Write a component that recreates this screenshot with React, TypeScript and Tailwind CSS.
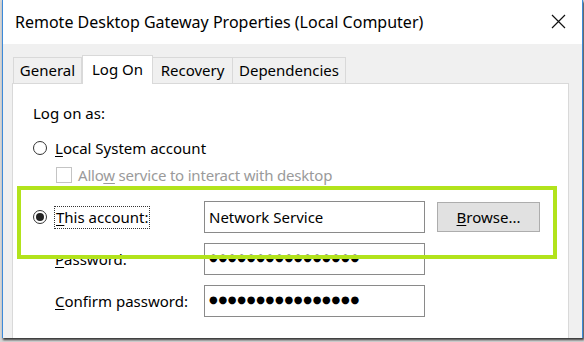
import React from "react";

const Radio = ({ checked }: { checked?: boolean }) => (
  <span className="w-[14px] h-[14px] rounded-full border border-[#333] bg-white flex items-center justify-center shrink-0">
    {checked && <span className="w-[8px] h-[8px] rounded-full bg-[#222]" />}
  </span>
);

const Field = ({ children }: { children?: React.ReactNode }) => (
  <div className="w-[221px] h-[32px] border border-[#8a8a8a] bg-white flex items-center px-[4px]">
    {children}
  </div>
);

const Dots = () => (
  <span className="font-['DejaVu_Sans',sans-serif] text-[10px] tracking-[0.7px] leading-none text-black mt-[-3px]">
    ●●●●●●●●●●●●●●●●
  </span>
);

export default function App() {
  return (
    <div className="w-[584px] h-[342px] bg-[#d6d6d6] overflow-hidden font-['Noto_Sans',sans-serif] text-[15px] text-black">
      <div className="ml-[2px] w-[581px] h-[338px] border-x border-[#3d8ad9] bg-[#f0f0f0] flex flex-col shadow-[1px_2px_2px_rgba(0,0,0,0.75)]">
        {/* title bar */}
        <div className="h-[44px] bg-white flex items-center justify-between pl-[12px] pr-[16px] shrink-0">
          <span className="text-[16px] leading-none">Remote Desktop Gateway Properties (Local Computer)</span>
          <svg width="15" height="15" viewBox="0 0 15 15" className="mt-[-1px]">
            <path d="M1 1 L14 14 M14 1 L1 14" stroke="#111" strokeWidth="1.2" />
          </svg>
        </div>

        {/* body */}
        <div className="flex-1 flex flex-col pl-[9px] pr-[13px] pt-[11px]">
          {/* tabs */}
          <div className="flex items-end h-[28px] relative z-10">
            <div className="w-[69px] h-[26px] border border-b-0 border-[#d9d9d9] bg-[#f0f0f0] flex items-center justify-center ml-[1px]">
              General
            </div>
            <div className="w-[71px] h-[29px] mb-[-1px] border border-b-0 border-[#d9d9d9] bg-white flex items-center justify-center pb-[2px]">
              Log On
            </div>
            <div className="w-[80px] h-[26px] border border-b-0 border-l-0 border-[#d9d9d9] bg-[#f0f0f0] flex items-center justify-center">
              Recovery
            </div>
            <div className="w-[113px] h-[26px] border border-b-0 border-l-0 border-[#d9d9d9] bg-[#f0f0f0] flex items-center justify-center">
              Dependencies
            </div>
          </div>

          {/* panel */}
          <div className="flex-1 bg-white border border-[#d9d9d9] border-b-0 pl-[20px] pt-[18px] relative">
            <div className="h-[22px] flex items-center">Log on as:</div>

            <div className="h-[22px] mt-[13px] flex items-center gap-[8px]">
              <Radio />
              <span>
                <span className="underline underline-offset-2">L</span>ocal System account
              </span>
            </div>

            <div className="h-[22px] mt-[5px] flex items-center gap-[6px] pl-[23px] text-[#9a9a9a] tracking-[-0.2px]">
              <span className="w-[16px] h-[16px] border border-[#c4c4c4] bg-white shrink-0" />
              <span>
                Allo<span className="underline underline-offset-2">w</span> service to interact with desktop
              </span>
            </div>

            <div className="h-[32px] mt-[15px] flex items-center">
              <div className="w-[171px] flex items-center gap-[7px]">
                <Radio checked />
                <span className="border border-dotted border-[#333] px-[1px] h-[23px] flex items-center">
                  <span className="underline underline-offset-2">T</span>his account:
                </span>
              </div>
              <Field>Network Service</Field>
              <button className="ml-[12px] w-[103px] h-[30px] bg-[#e1e1e1] border border-[#adadad] flex items-center justify-center">
                <span>
                  <span className="underline underline-offset-2">B</span>rowse...
                </span>
              </button>
            </div>

            <div className="h-[32px] mt-[10px] flex items-center">
              <div className="w-[171px] pl-[22px]">
                <span className="underline underline-offset-2">P</span>assword:
              </div>
              <Field>
                <Dots />
              </Field>
            </div>

            <div className="h-[32px] mt-[10px] flex items-center">
              <div className="w-[171px] pl-[22px]">
                <span className="underline underline-offset-2">C</span>onfirm password:
              </div>
              <Field>
                <Dots />
              </Field>
            </div>

            {/* highlight overlay */}
            <div className="absolute left-[4px] top-[102px] w-[540px] h-[73px] border-[4px] border-[#b2e31c] pointer-events-none" />
          </div>
        </div>
      </div>
    </div>
  );
}
